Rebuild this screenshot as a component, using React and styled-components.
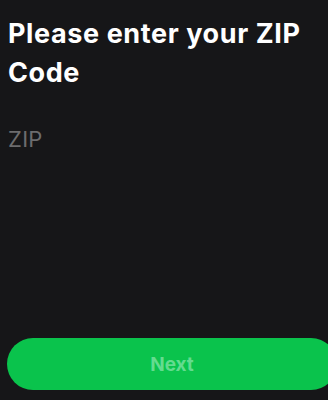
import React from 'react';
import styled, { createGlobalStyle } from 'styled-components';

const GlobalStyle = createGlobalStyle`
    html, body {
        margin:0;
        padding:0;
        background-color:#161618;
        overflow:hidden;
    }
    * {
        box-sizing:border-box;
    }
`;

const App = () => {
    return (
        <>
            <GlobalStyle />
            <StyledScreen>
                <StyledTitle>Please enter your ZIP Code</StyledTitle>
                <StyledZipInput type="text" placeholder="ZIP" />
                <StyledSpacer />
                <StyledNextButton disabled>Next</StyledNextButton>
            </StyledScreen>
        </>
    );
}

const StyledScreen = styled.div`
    display:flex;
    flex-direction:column;
    height:400px;
    padding:14px 0 10px 8px;
    font-family:Inter, "Liberation Sans", sans-serif;
`;
const StyledTitle = styled.h1`
    margin:0;
    width:310px;
    color:#fff;
    font-size:27px;
    font-weight:700;
    line-height:39px;
    letter-spacing:0.6px;
`;
const StyledZipInput = styled.input`
    margin-top:32px;
    width:200px;
    padding:0;
    border:none;
    outline:none;
    background:transparent;
    color:#fff;
    font-family:inherit;
    font-size:22px;
    line-height:30px;
    letter-spacing:0.3px;
    &::placeholder{
        color:#6c6c6e;
    }
`;
const StyledSpacer = styled.div`
    flex:1;
`;
const StyledNextButton = styled.button`
    width:330px;
    height:52px;
    margin-left:-1px;
    border:none;
    border-radius:26px;
    background-color:#0ac34c;
    color:#64db8f;
    font-family:inherit;
    font-size:19px;
    font-weight:700;
`;

export default App;
